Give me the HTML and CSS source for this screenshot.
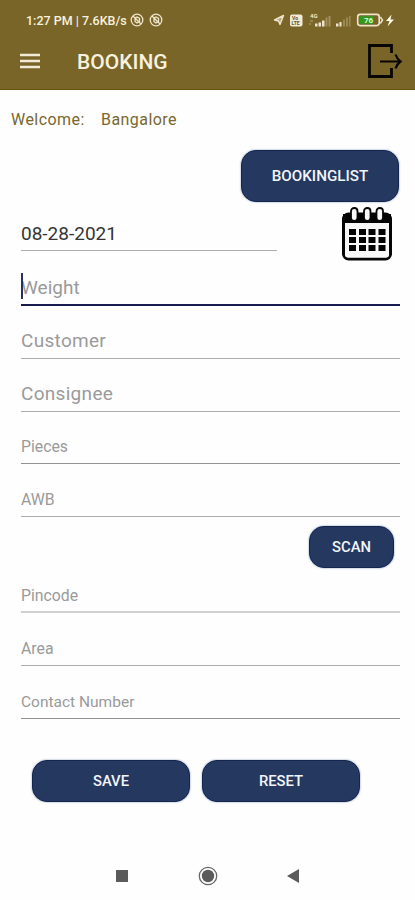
FILE: index.html
```html
<!DOCTYPE html>
<html lang="en">
<head>
<meta charset="utf-8">
<meta name="viewport" content="width=device-width">
<title>Booking</title>
<link rel="stylesheet" href="styles.css">
</head>
<body>
<header class="header">
  <div class="status">
    <span class="clock">1:27 PM | 7.6KB/s</span>
    <svg class="status-left" width="34" height="14" viewBox="0 0 34 14" fill="none" stroke="#eee5cb" stroke-width="1.3">
      <circle cx="7" cy="7" r="5.8"/><path d="M3 3l8 8M5 8.500V5.200l2-1.200 2.500 1.300v3L7 10z"/>
      <circle cx="26" cy="7" r="5.8"/><path d="M22 3l8 8M24 8.500V5.200l2-1.200 2.500 1.300v3L26 10z"/>
    </svg>
    <svg class="status-right" width="124" height="18" viewBox="0 0 124 18">
      <path d="M1.500 9l9-4.500-3.500 9-1.500-3.500z" fill="#b5a679" stroke="#eee5cb" stroke-width="1.400" stroke-linejoin="round"/>
      <rect x="17" y="3.500" width="12.500" height="12" rx="2" fill="#f1ead5"/>
      <text class="volte" x="19" y="9">Vo</text><text class="volte" x="18.500" y="14.200">LTE</text>
      <text class="network" x="37" y="6.500">4G</text>
      <path d="M37 10h3M36 13h2" stroke="#b8a67c"/>
      <path d="M42 15.500v-3h2.500v3zM45.500 15.500v-4H48v4zM49 15.500v-6h2.500v6z" fill="#eee5cb"/>
      <path d="M52.500 15.500v-9H54.500v9zM55.500 15.500V5h2v10.500z" fill="#a18f5d"/>
      <path d="M63 15.500v-3h2.500v3zM66.500 15.500v-4.500H68.500v4.500z" fill="#eee5cb"/>
      <path d="M70 15.500v-7h2v7zM73 15.500v-9h2v9zM76 15.500V5h1.500v10.500z" fill="#9b8953"/>
      <rect x="84.700" y="3.400" width="21.500" height="11.200" rx="2.500" fill="#766329" stroke="#eee5cb" stroke-width="1.600"/>
      <rect x="86.500" y="5.200" width="14" height="7.600" fill="#349820"/>
      <path d="M107.300 6l2.200 3-2.200 3.500" fill="none" stroke="#eee5cb" stroke-width="1.500"/>
      <text class="charge" x="91" y="12.200">76</text>
      <path d="M118.500 3.500L113 10h3.500l-2 5.500L121 8.500h-3.500z" fill="#fff9e6"/>
    </svg>
  </div>
  <div class="toolbar">
    <svg class="menu" width="20" height="16" viewBox="0 0 20 16" stroke="#f0ead7" stroke-width="2.600"><path d="M0 2h20M0 8h20M0 14h20"/></svg>
    <h1>BOOKING</h1>
    <svg class="logout" width="36" height="36" viewBox="0 0 36 36" fill="none" stroke="#080705" stroke-width="2.800"><path d="M24.500 10V2.500H2.500v31h22V25"/><path d="M13 18.500H33M28.500 11.500q1.500 4.500 5 7-3.500 2.500-5 7" stroke-width="2.200"/></svg>
  </div>
</header>
<main>
  <p class="welcome"><span>Welcome:</span><span class="city">Bangalore</span></p>
  <button class="button booking-list">BOOKINGLIST</button>
  <div class="date-row">
    <div class="field date"><span>08-28-2021</span></div>
    <svg class="calendar" width="54" height="56" viewBox="0 0 54 56">
      <path d="M3 8h48v10H3z"/>
      <rect x="3.500" y="8" width="47" height="45" rx="5" fill="none" stroke="#050505" stroke-width="3"/>
      <path d="M5 17h44v31q0 3.500-3 3.500H8q-3 0-3-3.500z" fill="#f7f7f7"/>
      <g fill="#fafafa" stroke="#050505" stroke-width="1.800"><rect x="11" y="2" width="6.500" height="13" rx="3.200"/><rect x="24" y="2" width="6.500" height="13" rx="3.200"/><rect x="36.500" y="2" width="6.500" height="13" rx="3.200"/></g>
      <path d="M9 23h7v6H9zM19 23h7v6h-7zM28.500 23h7v6h-7zM38.500 23h7v6h-7zM9 31h7v6H9zM19 31h7v6h-7zM28.500 31h7v6h-7zM38.500 31h7v6h-7zM9 39h7v6H9zM19 39h7v6h-7zM28.500 39h7v6h-7zM38.500 39h7v6h-7z"/>
    </svg>
  </div>
  <div class="field large weight focused"><i class="caret"></i><span>Weight</span></div>
  <div class="field large"><span>Customer</span></div>
  <div class="field large"><span>Consignee</span></div>
  <div class="field dark pieces"><span>Pieces</span></div>
  <div class="field"><span>AWB</span></div>
  <button class="button scan">SCAN</button>
  <div class="field thick"><span>Pincode</span></div>
  <div class="field"><span>Area</span></div>
  <div class="field dark contact"><span>Contact Number</span></div>
  <div class="actions"><button class="button">SAVE</button><button class="button">RESET</button></div>
</main>
<nav class="navigation">
  <svg width="20" height="20" viewBox="0 0 20 20"><path d="M4 4h12v12H4z" fill="#5b5b5b"/></svg>
  <svg width="20" height="20" viewBox="0 0 20 20"><circle cx="10" cy="10" r="8.700" fill="none" stroke="#686868" stroke-width="1.300"/><circle cx="10" cy="10" r="6.200" fill="#5b5b5b"/></svg>
  <svg width="20" height="20" viewBox="0 0 20 20"><path d="M4 10l12-7v14z" fill="#5b5b5b"/></svg>
</nav>
</body>
</html>
```
FILE: styles.css
```css
* { box-sizing: border-box; }
body {
  margin: 0;
  height: 900px;
  display: flex;
  flex-direction: column;
  overflow: hidden;
  background: #fefefe;
  font-family: Roboto, sans-serif;
}
.header {
  height: 90px;
  background: #7a6528;
  border-bottom: 1px solid #6b5311;
  color: #f7f1df;
}
.status {
  display: flex;
  align-items: center;
  height: 40px;
  padding-left: 26px;
}
.clock {
  width: 104px;
  font-size: 12.5px;
  font-weight: 500;
  white-space: nowrap;
}
.status-right { margin-left: 109px; }
.volte { font-size: 5px; font-weight: 700; fill: #65562c; }
.network { font-size: 6px; font-weight: 700; fill: #eee5cb; }
.charge { font-size: 8px; font-weight: 700; fill: #d9ffd0; }
.toolbar {
  display: flex;
  align-items: center;
  height: 42px;
  padding: 0 12px 0 20px;
}
.menu { margin: -1px 37px 0 0; }
h1 {
  margin: 2px 0 0;
  font-size: 21px;
  font-weight: 500;
  line-height: 24px;
}
.logout { margin-left: auto; }
main { padding: 0 15px 0 21px; }
.welcome {
  display: flex;
  margin: 19px 0 0 -10px;
  height: 22px;
  font-size: 16px;
  line-height: 22px;
  letter-spacing: .45px;
  color: #78672f;
}
.welcome span { width: 90px; }
.button {
  display: block;
  border: 1px solid #142650;
  border-radius: 15px;
  padding: 0;
  background: #243860;
  color: #f3f5fa;
  box-shadow: 0 0 2px #7587ad;
  font: 500 14.8px Roboto, sans-serif;
}
.booking-list {
  width: 158px;
  height: 52px;
  margin: 19px 1px 0 auto;
  font-size: 15.2px;
}
.date-row {
  display: flex;
  align-items: flex-start;
  justify-content: space-between;
  height: 50px;
}
.field {
  position: relative;
  display: flex;
  align-items: flex-end;
  height: 53px;
  padding-bottom: 7px;
  border-bottom: 1px solid #adadad;
  color: #9a9a9a;
  font-size: 15.8px;
  line-height: 18px;
}
.field.date {
  width: 256px;
  height: 49px;
  padding-bottom: 5px;
  color: #353535;
  font-size: 19px;
  line-height: 22px;
}
.calendar { margin: 4px 6px 0 0; }
.large {
  padding-bottom: 6px;
  font-size: 19px;
  line-height: 22px;
  letter-spacing: .3px;
}
.focused { height: 54px; border-bottom: 2px solid #17194f; }
.weight { padding-bottom: 5px; letter-spacing: 0; }
.caret {
  position: absolute;
  left: 0;
  top: 21px;
  width: 2px;
  height: 26px;
  background: #27305f;
}
.dark { border-color: #929292; }
.pieces { height: 52px; }
.thick { height: 45px; padding-bottom: 6px; border-bottom: 2px solid #d0d0d0; }
.contact { font-size: 15.5px; }
.scan {
  width: 85px;
  height: 42px;
  margin: 9px 6px 0 auto;
}
.actions {
  display: flex;
  gap: 12px;
  margin: 41px 0 0 11px;
}
.actions .button { width: 158px; height: 42px; }
.navigation {
  display: flex;
  justify-content: space-between;
  width: 191px;
  margin: auto 0 14px 112px;
}
```
